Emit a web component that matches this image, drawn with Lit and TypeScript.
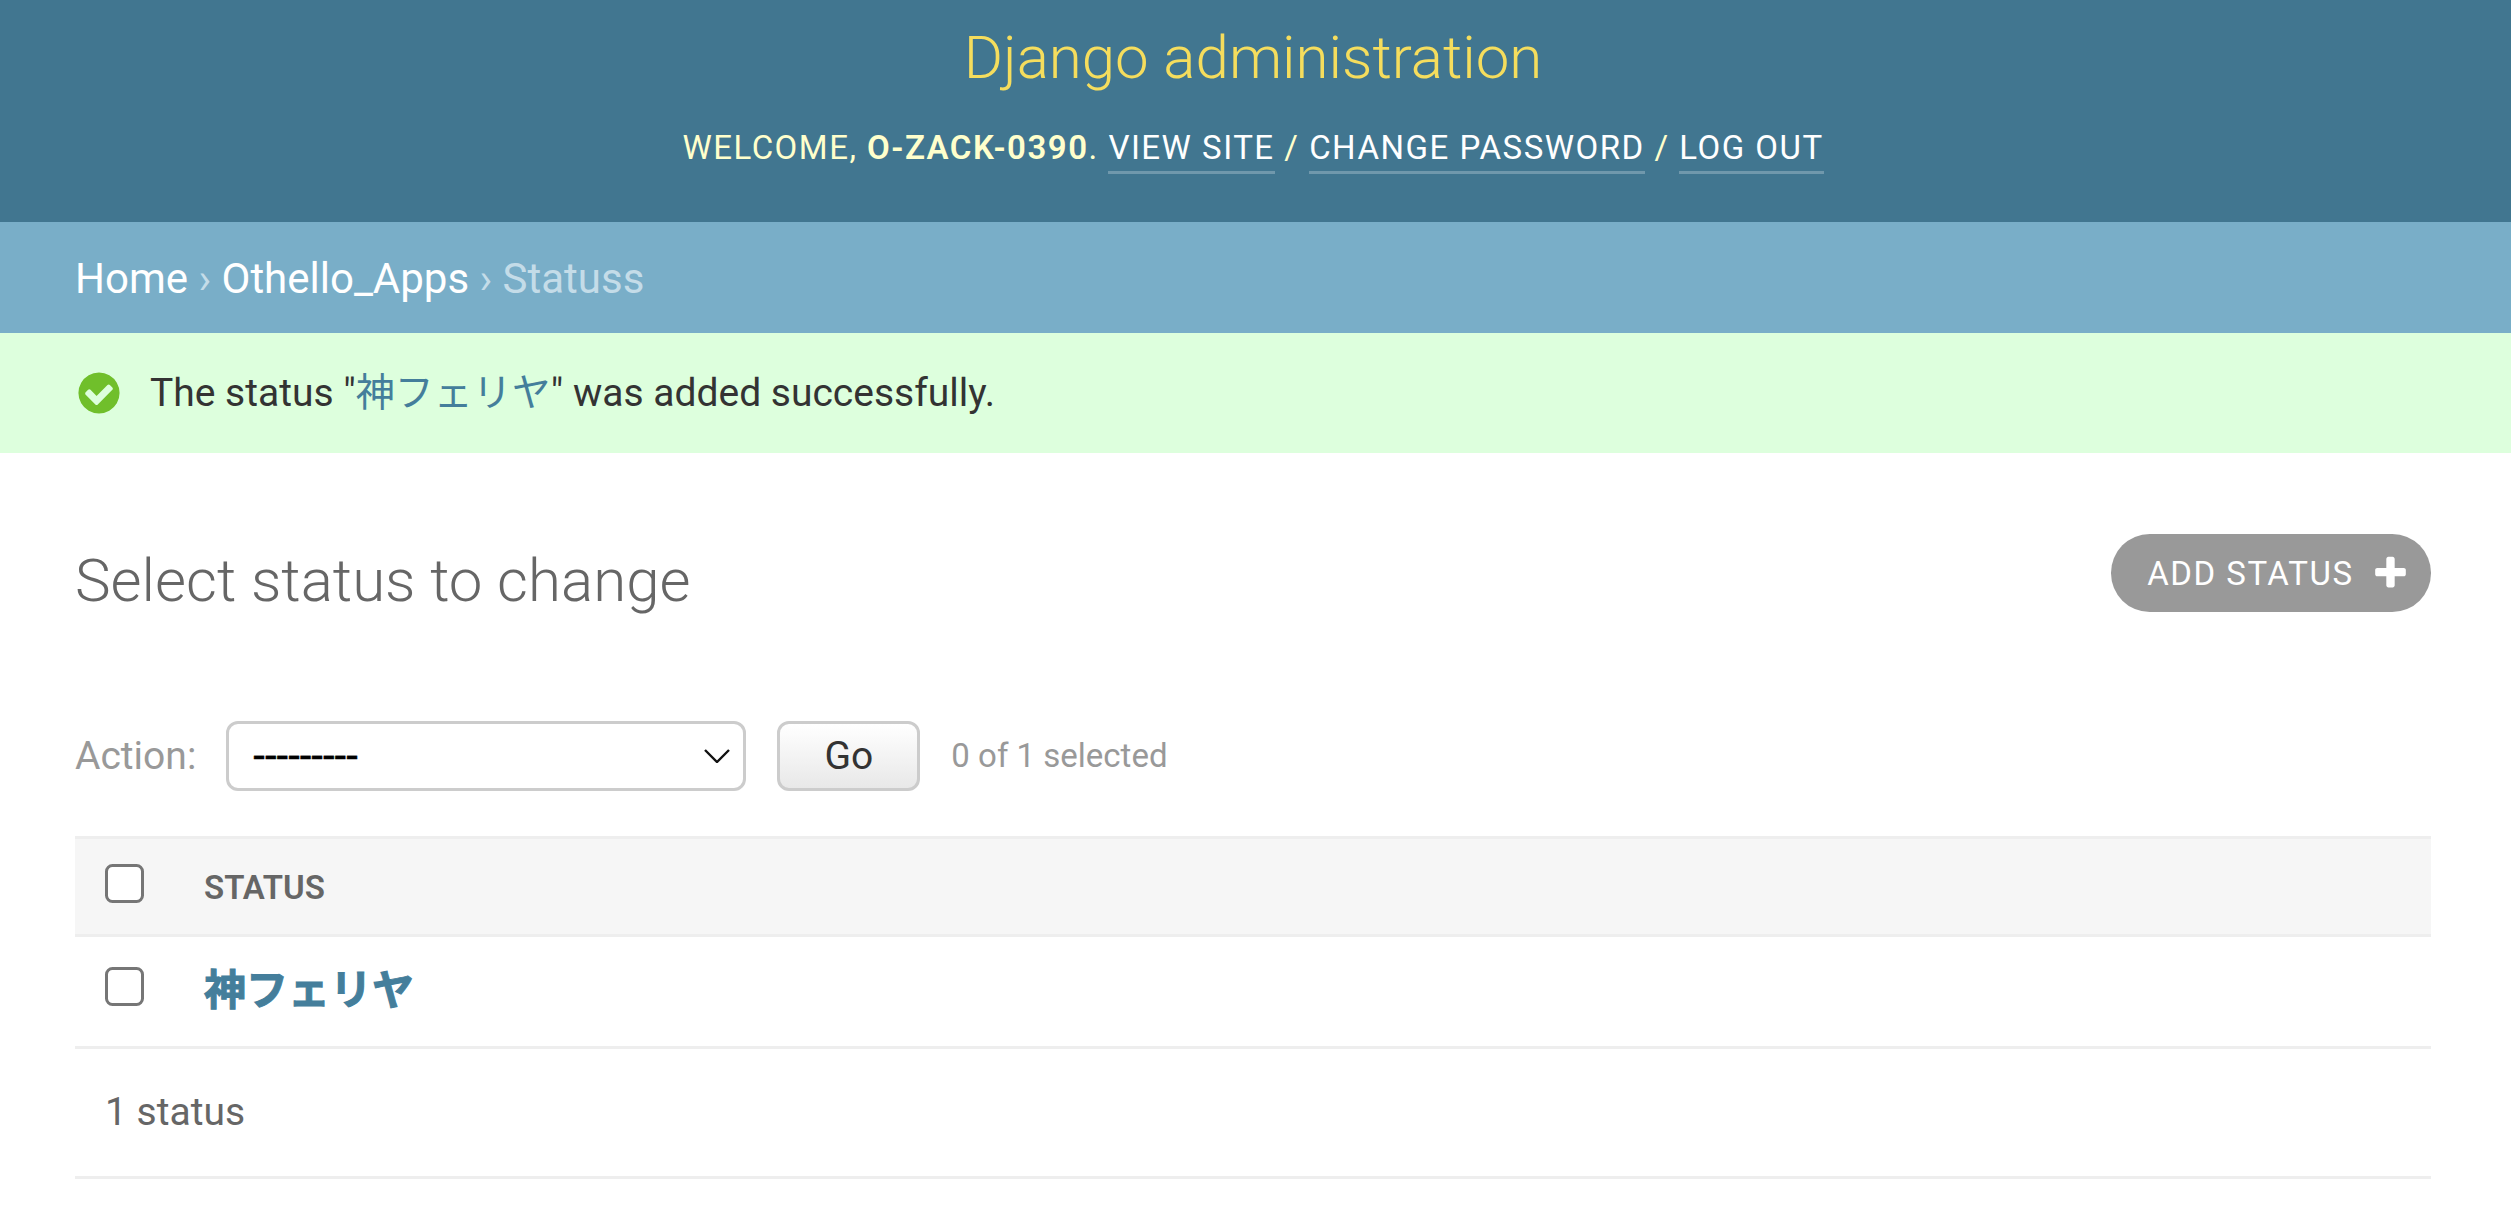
import { LitElement, html, css } from "lit";
import { customElement } from "lit/decorators.js";

@customElement("app-root")
export class AppRoot extends LitElement {
  static styles = css`
    :host {
      display: block;
      zoom: 2.5;
      font-family: Roboto, "Noto Sans CJK JP", sans-serif;
      font-size: 16.8px;
      color: #333;
      background: #fff;
      min-height: 486.4px;
    }
    a { text-decoration: none; color: #447e9b; }
    .header {
      display: flex;
      flex-direction: column;
      align-items: center;
      height: 88.8px;
      box-sizing: border-box;
      padding: 8.6px 32px 0 30px;
      background: #417690;
      color: #ffc;
    }
    .brand {
      margin: 0 0 9.3px;
      font-size: 24px;
      font-weight: 300;
      line-height: 1.2;
      color: #f5dd5d;
    }
    .tools {
      font-size: 13.2px;
      letter-spacing: 0.6px;
      line-height: 1.85;
      text-transform: uppercase;
    }
    .tools strong { font-weight: 600; }
    .tools a {
      color: #fff;
      padding-bottom: 1.5px;
      border-bottom: 1.2px solid rgba(255, 255, 255, 0.25);
    }
    .crumbs {
      box-sizing: border-box;
      height: 44.4px;
      padding: 10.6px 30px 0;
      background: #79aec8;
      color: #c4dce8;
      font-size: 16.8px;
      line-height: 24px;
    }
    .crumbs a { color: #fff; }
    .message {
      display: flex;
      align-items: center;
      box-sizing: border-box;
      height: 48px;
      padding-left: 30px;
      background: #dfd;
      font-size: 15.6px;
    }
    .message svg { width: 19.2px; height: 19.2px; margin-right: 10.8px; flex: none; }
    .message span { line-height: 20px; }
    .content { padding: 32.5px 32px 0 30px; }
    .title-row { display: flex; justify-content: space-between; align-items: flex-start; }
    h1 {
      margin: 0;
      padding-top: 4.3px;
      font-size: 24px;
      font-weight: 300;
      line-height: 1.2;
      color: #666;
    }
    .add {
      display: flex;
      align-items: center;
      gap: 7px;
      box-sizing: border-box;
      height: 31px;
      padding: 0 8.4px 0 14.4px;
      border-radius: 15.5px;
      background: #999;
      color: #fff;
      font-size: 13.2px;
      letter-spacing: 0.6px;
      text-transform: uppercase;
    }
    .add svg { width: 15.6px; height: 15.6px; }
    .actions {
      display: flex;
      align-items: center;
      margin-top: 41.4px;
      height: 28px;
      color: #999;
      font-size: 15.6px;
    }
    .select-wrap {
      position: relative;
      display: flex;
      margin: 0 12.4px 0 12px;
    }
    .select-wrap svg {
      position: absolute;
      right: 6.4px;
      top: 11.2px;
      width: 10.4px;
      height: 5.6px;
      pointer-events: none;
    }
    select {
      appearance: none;
      box-sizing: border-box;
      width: 208px;
      height: 28px;
      margin: 0;
      padding: 0 9.6px;
      border: 1.2px solid #ccc;
      border-radius: 4.8px;
      background: #fff;
      color: #000;
      font-family: Roboto, sans-serif;
      font-size: 16.8px;
      -webkit-text-stroke: 0.15px #000;
    }
    button {
      box-sizing: border-box;
      width: 57.2px;
      height: 28px;
      margin-right: 12.4px;
      padding: 0;
      border: 1.2px solid #ccc;
      border-radius: 4.8px;
      background: linear-gradient(#fff, #e8e8e8);
      color: #333;
      font-family: Roboto, sans-serif;
      font-size: 15.6px;
    }
    .selected { font-size: 13.2px; color: #999; }
    .table-head, .row, .foot { display: flex; align-items: center; padding-left: 12px; box-sizing: border-box; }
    .table-head {
      margin-top: 18.1px;
      height: 40.4px;
      background: #f6f6f6;
      border-top: 1.2px solid #eee;
      border-bottom: 1.2px solid #eee;
      color: #666;
      font-size: 13.2px;
      font-weight: 600;
      text-transform: uppercase;
    }
    .table-head span { padding-top: 1.3px; }
    input[type="checkbox"] {
      zoom: 1.2;
      width: 13px;
      height: 13px;
      margin: 0 20px 0 0;
      flex: none;
    }
    .table-head input { margin-bottom: 1.9px; }
    .row input { margin-bottom: 2.9px; }
    .row {
      height: 44.8px;
      border-bottom: 1.2px solid #eee;
    }
    .row a {
      font-size: 16.8px;
      font-weight: 700;
      margin-bottom: 4.2px;
      -webkit-text-stroke: 0.4px #447e9b;
    }
    .foot {
      height: 52px;
      border-bottom: 1.2px solid #eee;
      color: #666;
      font-size: 15.6px;
    }
  `;

  render() {
    return html`
      <header class="header">
        <div class="brand">Django administration</div>
        <div class="tools">
          Welcome, <strong>O-ZACK-0390</strong>.
          <a href="#">View site</a> / <a href="#">Change password</a> / <a href="#">Log out</a>
        </div>
      </header>
      <nav class="crumbs"><a href="#">Home</a> › <a href="#">Othello_Apps</a> › Statuss</nav>
      <div class="message">
        <svg viewBox="0 0 1792 1792"><path fill="#70bf2b" d="M1412 734q0-28-18-46l-91-90q-19-19-45-19t-45 19l-408 407-226-226q-19-19-45-19t-45 19l-91 90q-18 18-18 46 0 27 18 45l362 362q19 19 45 19 27 0 46-19l543-543q18-18 18-45zm252 162q0 209-103 385.500t-279.500 279.500-385.500 103-385.500-103-279.500-279.500-103-385.500 103-385.500 279.500-279.500 385.500-103 385.500 103 279.500 279.500 103 385.500z"/></svg>
        <span>The status "<a href="#">神フェリヤ</a>" was added successfully.</span>
      </div>
      <main class="content">
        <div class="title-row">
          <h1>Select status to change</h1>
          <a class="add" href="#">Add status
            <svg viewBox="0 0 1792 1792"><path fill="#fff" d="M1600 736v192q0 40-28 68t-68 28h-416v416q0 40-28 68t-68 28h-192q-40 0-68-28t-28-68v-416h-416q-40 0-68-28t-28-68v-192q0-40 28-68t68-28h416v-416q0-40 28-68t68-28h192q40 0 68 28t28 68v416h416q40 0 68 28t28 68z"/></svg>
          </a>
        </div>
        <div class="actions">
          <label>Action:</label>
          <div class="select-wrap">
            <select><option>---------</option></select>
            <svg viewBox="0 0 26 14"><path d="M1 1l12 12L25 1" fill="none" stroke="#111" stroke-width="2.4"/></svg>
          </div>
          <button type="button">Go</button>
          <span class="selected">0 of 1 selected</span>
        </div>
        <div class="table-head"><input type="checkbox" /><span>Status</span></div>
        <div class="row"><input type="checkbox" /><a href="#">神フェリヤ</a></div>
        <div class="foot">1 status</div>
      </main>
    `;
  }
}
